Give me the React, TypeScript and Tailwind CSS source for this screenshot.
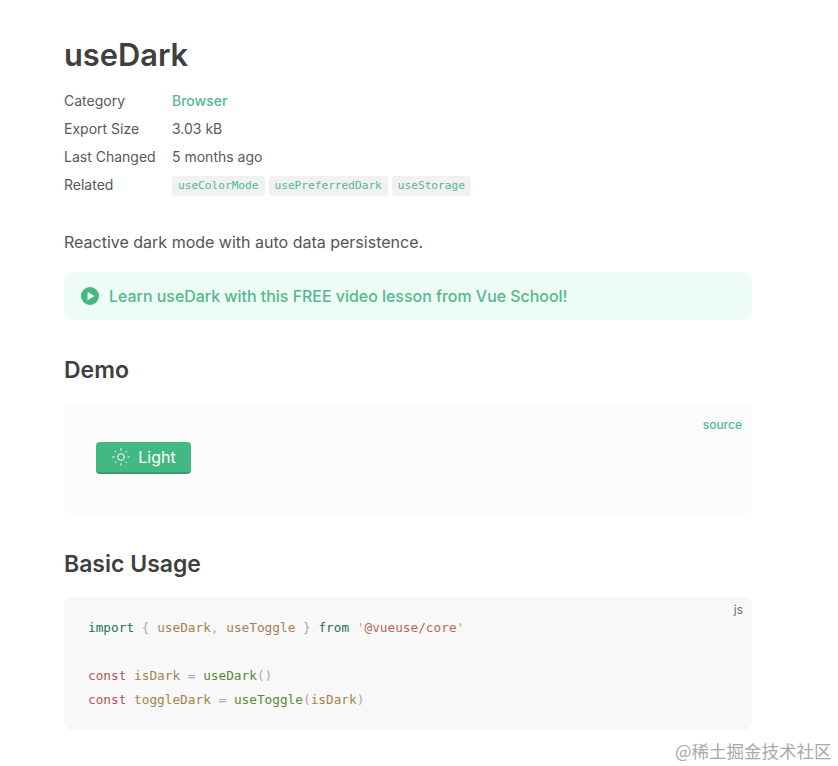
import { Sun } from "lucide-react";

const inter = "font-['Inter',sans-serif]";
const mono = "font-['DejaVu_Sans_Mono',monospace]";

const rows = [
  { label: "Category", value: <span className="font-medium text-[#55b88e]">Browser</span> },
  { label: "Export Size", value: "3.03 kB" },
  { label: "Last Changed", value: "5 months ago" },
];

const related = ["useColorMode", "usePreferredDark", "useStorage"];

export default function App() {
  return (
    <div className={`relative h-[766px] w-[838px] overflow-hidden bg-white text-[#3f3f3f] ${inter}`}>
      <div className="flex w-[688px] ml-16 flex-col pt-[32px]">
        <h1 className="h-[46px] text-[30.8px] leading-[46px] font-semibold text-[#3f3f3f]">useDark</h1>

        <div className="mt-[8px] flex flex-col text-[14px] text-[#595959]">
          {rows.map((row) => (
            <div key={row.label} className="flex h-[28px] items-center">
              <div className="w-[108px]">{row.label}</div>
              <div>{row.value}</div>
            </div>
          ))}
          <div className="flex h-[28px] items-center">
            <div className="w-[108px]">Related</div>
            <div className="mt-1 flex gap-1">
              {related.map((name) => (
                <span
                  key={name}
                  className={`flex h-[20px] items-center rounded-[4px] bg-[#f1f1f1] px-[6px] text-[11.15px] text-[#55b88e] ${mono}`}
                >
                  {name}
                </span>
              ))}
            </div>
          </div>
        </div>

        <p className="mt-[32px] text-[16px] leading-[24px] text-[#555555]">
          Reactive dark mode with auto data persistence.
        </p>

        <div className="mt-[18px] flex h-[48px] items-center gap-[10px] rounded-lg bg-[#edfcf4] pl-[17px] text-[15.93px] font-medium text-[#55b88e]">
          <svg width="18" height="18" viewBox="0 0 18 18">
            <circle cx="9" cy="9" r="9" fill="#42b883" />
            <path d="M6.5 4.8 13.5 9l-7 4.2z" fill="#edfcf4" />
          </svg>
          <span className="pt-[2px]">Learn useDark with this FREE video lesson from Vue School!</span>
        </div>

        <h2 className="mt-[32px] text-[23px] leading-[36px] font-semibold text-[#3f3f3f]">Demo</h2>

        <div className="relative mt-[16px] h-[110px] rounded-lg bg-[#fbfbfb] pl-[32px] pt-[38px]">
          <span className="absolute top-[12px] right-[10px] text-[12px] font-medium text-[#55b88e]">source</span>
          <button className="flex h-[32px] w-[95px] items-center justify-center gap-[7px] rounded-[4px] border-b-2 border-[#3a9c70] bg-[#42b883] text-[16px] text-white">
            <Sun size={20} strokeWidth={1.15} />
            <span>Light</span>
          </button>
        </div>

        <h2 className="mt-[32px] text-[23px] leading-[36px] font-semibold text-[#3f3f3f]">Basic Usage</h2>

        <div className={`relative mt-[15px] h-[133px] rounded-lg bg-[#f8f8f8] pl-[24px] pt-[19px] text-[12.75px] leading-[24px] ${mono}`}>
          <span className={`absolute top-[1px] right-[9px] text-[12px] text-[#7d6a6d] ${inter}`}>js</span>
          <div>
            <span className="text-[#1e754f]">import</span>
            <span className="text-[#aaaaaa]"> {"{"} </span>
            <span className="text-[#a6824f]">useDark</span>
            <span className="text-[#aaaaaa]">, </span>
            <span className="text-[#a6824f]">useToggle</span>
            <span className="text-[#aaaaaa]"> {"}"} </span>
            <span className="text-[#1e754f]">from</span>
            <span className="text-[#c5938f]"> '</span>
            <span className="text-[#b56959]">@vueuse/core</span>
            <span className="text-[#c5938f]">'</span>
          </div>
          <div className="h-[24px]" />
          <div>
            <span className="text-[#ab5959]">const</span>
            <span className="text-[#a6824f]"> isDark</span>
            <span className="text-[#aaaaaa]"> = </span>
            <span className="text-[#59873a]">useDark</span>
            <span className="text-[#aaaaaa]">()</span>
          </div>
          <div>
            <span className="text-[#ab5959]">const</span>
            <span className="text-[#a6824f]"> toggleDark</span>
            <span className="text-[#aaaaaa]"> = </span>
            <span className="text-[#59873a]">useToggle</span>
            <span className="text-[#aaaaaa]">(</span>
            <span className="text-[#a6824f]">isDark</span>
            <span className="text-[#aaaaaa]">)</span>
          </div>
        </div>
      </div>

      {/* site watermark */}
      <div className="absolute top-[740px] left-[675px] font-['Noto_Sans_CJK_SC',sans-serif] text-[17.5px] leading-[22px] text-[#a9a9a9]">
        @稀土掘金技术社区
      </div>
    </div>
  );
}
